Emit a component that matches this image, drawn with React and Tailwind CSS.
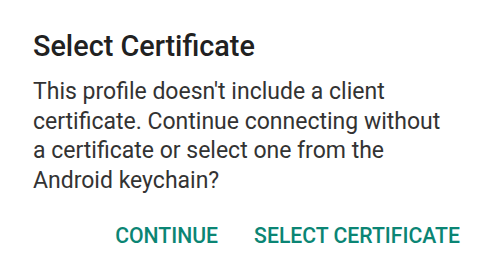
export default function App() {
  return (
    <div className="w-[490px] h-[277px] bg-white overflow-hidden" style={{ fontFamily: 'Roboto, "Noto Sans", sans-serif' }}>
      <div className="pl-[33px] pr-[40px] pt-[29px]">
        <h1 className="text-[28.8px] leading-[34px] font-medium text-[#212121]">Select Certificate</h1>
        <p className="mt-[14px] text-[23px] leading-[29.5px] text-[#333333]">
          This profile doesn't include a client certificate. Continue connecting without a certificate or select one from the Android keychain?
        </p>
      </div>
      <div className="flex justify-end gap-[36px] pr-[30px] mt-[30px]">
        <button className="text-[21.2px] font-medium text-[#0b8574] leading-none">CONTINUE</button>
        <button className="text-[21.2px] font-medium text-[#0b8574] leading-none">SELECT CERTIFICATE</button>
      </div>
    </div>
  );
}
